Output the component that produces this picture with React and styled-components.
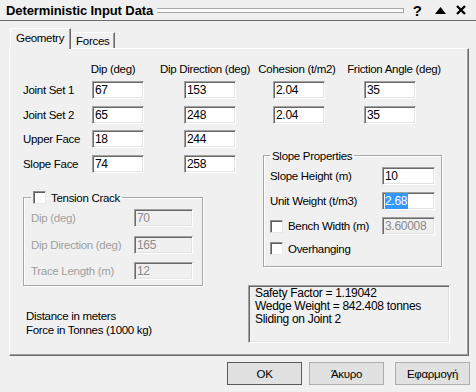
import styled, { createGlobalStyle } from "styled-components";

const GlobalStyle = createGlobalStyle`
  html, body {
    margin: 0;
    padding: 0;
    background: #f0f0f0;
  }
  body {
    font-family: "Liberation Sans", Arial, sans-serif;
    font-size: 11px;
    color: #000;
  }
  * { box-sizing: border-box; }
`;

const Window = styled.div`
  width: 476px;
  height: 392px;
  background: #f0f0f0;
  display: flex;
  flex-direction: column;
  overflow: hidden;
`;

const TitleBar = styled.div`
  height: 21px;
  border-bottom: 1px solid #6b6b6b;
  display: flex;
  align-items: center;
  padding: 0 10px 0 6px;
`;

const Title = styled.span`
  font-size: 13px;
  font-weight: bold;
  letter-spacing: -0.1px;
`;

const Grip = styled.div`
  flex: 1;
  height: 5px;
  margin: 0 9px 0 4px;
  border: 1px solid #a8a8a8;
  border-left: none;
  background: #fafafa;
`;

const TitleIcon = styled.span`
  display: flex;
  align-items: center;
  margin-left: ${(p) => p.gap || 0}px;
  font-size: 15px;
  font-weight: bold;
`;

const Body = styled.div`
  padding: 0 7px 0 9px;
`;

const Tabs = styled.div`
  display: flex;
  align-items: flex-end;
  margin: 7px 0 0 1px;
  height: 20px;
`;

const Tab = styled.div`
  position: relative;
  z-index: ${(p) => (p.active ? 1 : 0)};
  height: ${(p) => (p.active ? 21 : 16)}px;
  margin-bottom: ${(p) => (p.active ? -1 : 0)}px;
  padding: ${(p) => (p.active ? "3px 6px 0 5px" : "2px 5px 0 5px")};
  background: #f0f0f0;
  border-top: 1px solid #fff;
  border-left: ${(p) => (p.active ? "1px solid #fff" : "none")};
  border-right: 1px solid #696969;
  box-shadow: inset -1px 0 #a0a0a0;
  font-size: 11.5px;
  letter-spacing: -0.3px;
`;

const Panel = styled.div`
  height: 308px;
  border: 1px solid;
  border-color: #fff #696969 #696969 #fff;
  box-shadow: inset -1px -1px #a0a0a0;
  padding: 14px 0 0 13px;
`;

const Headers = styled.div`
  display: grid;
  grid-template-columns: 69px 92px 89px 91px 52px;
  height: 13px;
  margin-bottom: 5px;
`;

const Header = styled.div`
  grid-column: ${(p) => p.col};
  width: 52px;
  display: flex;
  justify-content: center;
  margin-left: ${(p) => p.shift || 0}px;
  white-space: nowrap;
  line-height: 13px;
  font-size: 11.5px;
  letter-spacing: -0.3px;
`;

const Grid = styled.div`
  display: grid;
  grid-template-columns: ${(p) => p.cols};
  grid-auto-rows: 18px;
  row-gap: 6.5px;
  align-items: center;
`;

const Label = styled.span`
  white-space: nowrap;
  font-size: 11.5px;
  letter-spacing: -0.3px;
  color: ${(p) => (p.disabled ? "#a0a0a0" : "#000")};
`;

const Field = styled.div`
  width: ${(p) => p.w || 52}px;
  height: 18px;
  display: flex;
  align-items: center;
  padding-left: 2px;
  background: ${(p) => (p.disabled ? "#f0f0f0" : "#fff")};
  color: ${(p) => (p.disabled ? "#8a8a8a" : "#000")};
  border: 1px solid;
  border-color: #a0a0a0 #fff #fff #a0a0a0;
  box-shadow: inset 1px 1px #696969, inset -1px -1px #e3e3e3;
  font-size: 12px;
  letter-spacing: -0.3px;
`;

const Selected = styled.span`
  background: #3399ff;
  color: #fff;
  padding: 1px 1px 1px 0;
`;

const Lower = styled.div`
  display: flex;
  margin-top: 6.5px;
`;

const LeftCol = styled.div`
  width: 225px;
  display: flex;
  flex-direction: column;
`;

const RightCol = styled.div`
  display: flex;
  flex-direction: column;
  padding-top: 19px;
`;

const Group = styled.fieldset`
  margin: ${(p) => p.margin};
  width: ${(p) => p.w}px;
  min-width: 0;
  border: 1px solid #a8a8a8;
  box-shadow: inset 1px 1px #fff, 1px 1px #fff;
  padding: ${(p) => p.pad};
  display: flex;
  flex-direction: column;
  gap: ${(p) => p.gap}px;
`;

const Legend = styled.legend`
  padding: 0 2px;
  display: flex;
  align-items: center;
  height: 13px;
  font-size: 11.5px;
  letter-spacing: -0.3px;
`;

const Row = styled.div`
  display: grid;
  grid-template-columns: ${(p) => p.label}px auto;
  align-items: center;
  height: ${(p) => p.h || 18}px;
`;

const CheckRow = styled.div`
  display: flex;
  align-items: center;
  gap: 5px;
`;

const Check = styled.span`
  width: 13px;
  height: 13px;
  background: #fff;
  border: 1px solid;
  border-color: #8f8f8f #e8e8e8 #e8e8e8 #8f8f8f;
  box-shadow: inset 1px 1px #5f5f5f;
  margin-right: ${(p) => p.mr || 0}px;
`;

const Notes = styled.div`
  margin: 23px 0 0 3px;
  line-height: 14px;
  font-size: 11.5px;
  letter-spacing: -0.3px;
`;

const Result = styled.div`
  margin-top: 18px;
  width: 202px;
  height: 58px;
  background: #f0f0f0;
  border: 1px solid;
  border-color: #a0a0a0 #fff #fff #a0a0a0;
  box-shadow: inset 1px 1px #696969, inset -1px -1px #e3e3e3;
  padding: 1px 0 0 6px;
  line-height: 13px;
  font-size: 12px;
  letter-spacing: -0.3px;
`;

const ButtonRow = styled.div`
  display: flex;
  justify-content: flex-end;
  padding-right: 6px;
  margin-top: 6px;
`;

const Button = styled.button`
  width: 75px;
  height: 23px;
  margin-left: ${(p) => p.gap || 0}px;
  background: #e1e1e1;
  border: 1px solid ${(p) => (p.primary ? "#5a5a5a" : "#adadad")};
  font-family: "Liberation Sans", Arial, sans-serif;
  font-size: 11.5px;
  letter-spacing: -0.3px;
  color: #000;
  padding: 0;
`;

const joints = [
  ["Joint Set 1", "67", "153", "2.04", "35"],
  ["Joint Set 2", "65", "248", "2.04", "35"],
];

const faces = [
  ["Upper  Face", "18", "244"],
  ["Slope Face", "74", "258"],
];

const tension = [
  ["Dip (deg)", "70"],
  ["Dip Direction (deg)", "165"],
  ["Trace Length (m)", "12"],
];

export default function App() {
  return (
    <Window>
      <GlobalStyle />
      <TitleBar>
        <Title>Deterministic Input Data</Title>
        <Grip />
        <TitleIcon>?</TitleIcon>
        <TitleIcon gap={13}>
          <svg width="11" height="7" viewBox="0 0 11 7">
            <polygon points="5.5,0 11,7 0,7" fill="#000" />
          </svg>
        </TitleIcon>
        <TitleIcon gap={10}>
          <svg width="10" height="10" viewBox="0 0 10 10">
            <path d="M1 1 L9 9 M9 1 L1 9" stroke="#000" strokeWidth="2.3" />
          </svg>
        </TitleIcon>
      </TitleBar>
      <Body>
        <Tabs>
          <Tab active>Geometry</Tab>
          <Tab>Forces</Tab>
        </Tabs>
        <Panel>
          <Headers>
            <Header col={2} shift={-5}>Dip (deg)</Header>
            <Header col={3} shift={-5}>Dip Direction (deg)</Header>
            <Header col={4} shift={-2}>Cohesion (t/m2)</Header>
            <Header col={5} shift={4}>Friction Angle (deg)</Header>
          </Headers>
          <Grid cols="69px 92px 89px 91px 52px">
            {joints.map(([name, ...vals]) => [
              <Label key={name}>{name}</Label>,
              ...vals.map((v, i) => <Field key={name + i}>{v}</Field>),
            ])}
          </Grid>
          <Lower>
            <LeftCol>
              <Grid cols="69px 92px 52px">
                {faces.map(([name, ...vals]) => [
                  <Label key={name}>{name}</Label>,
                  ...vals.map((v, i) => <Field key={name + i}>{v}</Field>),
                ])}
              </Grid>
              <Group w={180} margin="18.5px 0 0 0" pad="5px 7px 5px 7px" gap={8.5}>
                <Legend>
                  <Check mr={5} />
                  Tension Crack
                </Legend>
                {tension.map(([name, v]) => (
                  <Row key={name} label={103}>
                    <Label disabled>{name}</Label>
                    <Field w={59} disabled>{v}</Field>
                  </Row>
                ))}
              </Group>
              <Notes>
                Distance in meters
                <br />
                Force in Tonnes (1000 kg)
              </Notes>
            </LeftCol>
            <RightCol>
              <Group w={179} margin="0 0 0 15px" pad="5px 6px 11px 6px" gap={7}>
                <Legend>Slope Properties</Legend>
                <Row label={112}>
                  <Label>Slope Height (m)</Label>
                  <Field w={53}>10</Field>
                </Row>
                <Row label={112}>
                  <Label>Unit Weight (t/m3)</Label>
                  <Field w={53}>
                    <Selected>2.68</Selected>
                  </Field>
                </Row>
                <Row label={112}>
                  <CheckRow>
                    <Check />
                    <Label>Bench Width (m)</Label>
                  </CheckRow>
                  <Field w={53} disabled>3.60008</Field>
                </Row>
                <Row label={112} h={13}>
                  <CheckRow>
                    <Check />
                    <Label>Overhanging</Label>
                  </CheckRow>
                </Row>
              </Group>
              <Result>
                Safety Factor = 1.19042
                <br />
                Wedge Weight = 842.408 tonnes
                <br />
                Sliding on Joint 2
              </Result>
            </RightCol>
          </Lower>
        </Panel>
      </Body>
      <ButtonRow>
        <Button primary>OK</Button>
        <Button gap={7}>Άκυρο</Button>
        <Button gap={11}>Εφαρμογή</Button>
      </ButtonRow>
    </Window>
  );
}
